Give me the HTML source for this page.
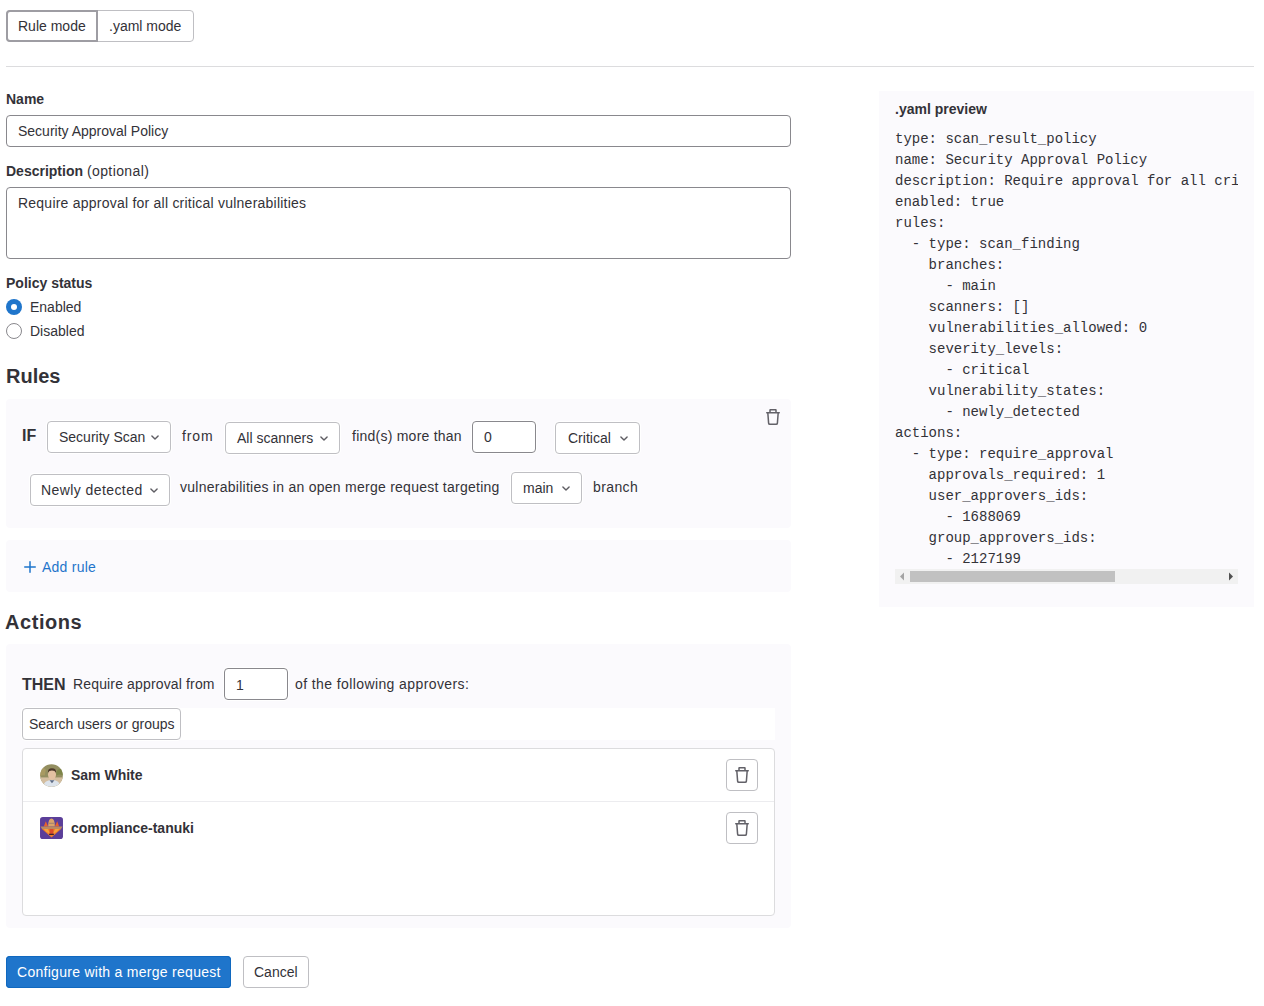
<!DOCTYPE html>
<html><head><meta charset="utf-8">
<style>
html,body{margin:0;padding:0;background:#fff;}
body{width:1264px;height:1006px;position:relative;overflow:hidden;font-family:"Liberation Sans",sans-serif;font-size:14px;color:#333238;}
.a{position:absolute;box-sizing:border-box;}
.t{position:absolute;white-space:nowrap;line-height:16px;}
.b{font-weight:bold;}
.box{position:absolute;background:#fbfafd;border-radius:4px;}
.inp{position:absolute;box-sizing:border-box;background:#fff;border:1px solid #89888d;border-radius:4px;box-shadow:0 0 0 1px #fff;}
.dd{position:absolute;box-sizing:border-box;background:#fff;border:1px solid #bfbfc3;border-radius:4px;box-shadow:0 0 0 1px #fff;}
.chev{position:absolute;width:16px;height:16px;}
.mono{position:absolute;font-family:"Liberation Mono",monospace;font-size:14px;line-height:21px;white-space:pre;color:#333238;}
</style></head><body>

<!-- mode toggle -->
<div class="a" style="left:6px;top:10px;width:188px;height:32px;border:1px solid #bfbfc3;border-radius:4px;"></div>
<div class="a" style="left:6px;top:10px;width:92px;height:32px;border:2px solid #9e9da3;border-radius:4px 0 0 4px;"></div>
<div class="t" style="left:18px;top:18px;">Rule mode</div>
<div class="t" style="left:109px;top:18px;">.yaml mode</div>

<!-- hr -->
<div class="a" style="left:6px;top:66px;width:1248px;height:1px;background:#dcdcde;"></div>

<!-- Name -->
<div class="t b" style="left:6px;top:91px;">Name</div>
<div class="inp" style="left:6px;top:115px;width:785px;height:32px;"></div>
<div class="t" style="left:18px;top:123px;">Security Approval Policy</div>

<!-- Description -->
<div class="t" style="left:6px;top:163px;"><span class="b">Description</span> <span style="letter-spacing:0.4px">(optional)</span></div>
<div class="inp" style="left:6px;top:187px;width:785px;height:72px;"></div>
<div class="t" style="left:18px;top:195px;letter-spacing:0.23px;">Require approval for all critical vulnerabilities</div>

<!-- Policy status -->
<div class="t b" style="left:6px;top:275px;">Policy status</div>
<div class="a" style="left:6px;top:299px;width:16px;height:16px;border-radius:50%;background:#1f75cb;"></div>
<div class="a" style="left:11px;top:304px;width:6px;height:6px;border-radius:50%;background:#fff;"></div>
<div class="t" style="left:30px;top:299px;">Enabled</div>
<div class="a" style="left:6px;top:323px;width:16px;height:16px;border-radius:50%;border:1px solid #89888d;background:#fff;"></div>
<div class="t" style="left:30px;top:323px;">Disabled</div>

<!-- Rules -->
<div class="t b" style="left:6px;top:365px;font-size:20px;line-height:23px;">Rules</div>
<div class="box" style="left:6px;top:399px;width:785px;height:129px;"></div>


<!-- rule row 1 -->
<div class="t b" style="left:22px;top:427px;font-size:16px;line-height:18px;">IF</div>
<div class="dd" style="left:47px;top:421px;width:124px;height:32px;"></div>
<div class="t" style="left:59px;top:429px;">Security Scan</div>
<svg class="chev" style="left:147px;top:429px;" viewBox="0 0 16 16"><path fill="none" stroke="#5e5d63" stroke-width="1.4" stroke-linecap="round" stroke-linejoin="round" d="M4.9 6.9L8 10l3.1-3.1"/></svg>
<div class="t" style="left:182px;top:428px;letter-spacing:0.9px;">from</div>
<div class="dd" style="left:225px;top:422px;width:115px;height:32px;"></div>
<div class="t" style="left:237px;top:430px;">All scanners</div>
<svg class="chev" style="left:316px;top:430px;" viewBox="0 0 16 16"><path fill="none" stroke="#5e5d63" stroke-width="1.4" stroke-linecap="round" stroke-linejoin="round" d="M4.9 6.9L8 10l3.1-3.1"/></svg>
<div class="t" style="left:352px;top:428px;letter-spacing:0.24px;">find(s) more than</div>
<div class="inp" style="left:472px;top:421px;width:64px;height:32px;"></div>
<div class="t" style="left:484px;top:429px;">0</div>
<div class="dd" style="left:555px;top:422px;width:85px;height:32px;"></div>
<div class="t" style="left:568px;top:430px;">Critical</div>
<svg class="chev" style="left:616px;top:430px;" viewBox="0 0 16 16"><path fill="none" stroke="#5e5d63" stroke-width="1.4" stroke-linecap="round" stroke-linejoin="round" d="M4.9 6.9L8 10l3.1-3.1"/></svg>
<svg class="a" style="left:765px;top:409px;width:16px;height:16px;" viewBox="0 0 16 16"><path fill="#626168" fill-rule="evenodd" d="M5.750 3V1.5h4.5V3h-4.5Zm-1.5 0V1a1 1 0 0 1 1-1h5.5a1 1 0 0 1 1 1v2h2.5a.75.75 0 0 1 0 1.5h-.365l-.743 9.653A2 2 0 0 1 11.148 16H4.852a2 2 0 0 1-1.994-1.847L2.115 4.5H1.75a.75.75 0 0 1 0-1.5h2.5Zm-.63 1.5h8.76l-.734 9.538a.5.5 0 0 1-.498.462H4.852a.5.5 0 0 1-.498-.462L3.62 4.5Z"/></svg>

<!-- rule row 2 -->
<div class="dd" style="left:30px;top:474px;width:140px;height:32px;"></div>
<div class="t" style="left:41px;top:482px;letter-spacing:0.42px;">Newly detected</div>
<svg class="chev" style="left:146px;top:482px;" viewBox="0 0 16 16"><path fill="none" stroke="#5e5d63" stroke-width="1.4" stroke-linecap="round" stroke-linejoin="round" d="M4.9 6.9L8 10l3.1-3.1"/></svg>
<div class="t" style="left:180px;top:479px;letter-spacing:0.26px;">vulnerabilities in an open merge request targeting</div>
<div class="dd" style="left:511px;top:472px;width:71px;height:32px;"></div>
<div class="t" style="left:523px;top:480px;">main</div>
<svg class="chev" style="left:558px;top:480px;" viewBox="0 0 16 16"><path fill="none" stroke="#5e5d63" stroke-width="1.4" stroke-linecap="round" stroke-linejoin="round" d="M4.9 6.9L8 10l3.1-3.1"/></svg>
<div class="t" style="left:593px;top:479px;letter-spacing:0.4px;">branch</div>

<!-- add rule -->
<div class="box" style="left:6px;top:540px;width:785px;height:52px;"></div>
<svg class="a" style="left:22px;top:559px;width:16px;height:16px;" viewBox="0 0 16 16"><path fill="#1f75cb" d="M8.75 2.75a.75.75 0 0 0-1.5 0v4.5h-4.5a.75.75 0 0 0 0 1.5h4.5v4.5a.75.75 0 0 0 1.5 0v-4.5h4.5a.75.75 0 0 0 0-1.5h-4.5v-4.5Z"/></svg>
<div class="t" style="left:42px;top:559px;color:#1f75cb;letter-spacing:0.25px;">Add rule</div>

<!-- Actions -->
<div class="t b" style="left:5px;top:611px;font-size:20px;line-height:23px;letter-spacing:0.55px;">Actions</div>
<div class="box" style="left:6px;top:644px;width:785px;height:284px;"></div>
<div class="t b" style="left:22px;top:676px;font-size:16px;line-height:18px;">THEN</div>
<div class="t" style="left:73px;top:676px;letter-spacing:0.15px;">Require approval from</div>
<div class="inp" style="left:224px;top:668px;width:64px;height:32px;"></div>
<div class="t" style="left:236px;top:677px;">1</div>
<div class="t" style="left:295px;top:676px;letter-spacing:0.4px;">of the following approvers:</div>

<div class="a" style="left:22px;top:708px;width:753px;height:32px;background:#fff;"></div>
<div class="dd" style="left:22px;top:708px;width:159px;height:32px;"></div>
<div class="t" style="left:29px;top:716px;">Search users or groups</div>

<div class="a" style="left:22px;top:748px;width:753px;height:168px;background:#fff;border:1px solid #dcdcde;border-radius:4px;"></div>
<div class="a" style="left:23px;top:801px;width:751px;height:1px;background:#ececef;"></div>

<!-- Sam avatar -->
<svg class="a" style="left:40px;top:764px;width:23px;height:23px;" viewBox="0 0 24 24">
<defs><clipPath id="c1"><circle cx="12" cy="12" r="11.8"/></clipPath></defs>
<g clip-path="url(#c1)">
<rect width="24" height="24" fill="#938e60"/>
<path d="M0 0H24V6Q20 3 17 8L17 12Q21 10 24 12V0Z" fill="#7d8548"/>
<path d="M0 4Q3 2 6 6L5 12Q2 11 0 13Z" fill="#a89a62"/>
<rect x="0" y="14" width="24" height="10" fill="#d4bea0"/>
<path d="M3 24Q4 17 12.5 16.5Q21 17 21 24Z" fill="#dde4ec"/>
<path d="M10 17L12.5 20L15 17Z" fill="#5d6b84"/>
<ellipse cx="12.5" cy="11" rx="4.2" ry="5.4" fill="#e3c1a2"/>
<path d="M8.2 9Q8 4.5 12.5 4.5Q17 4.5 16.8 9Q15.5 6.8 12.5 6.8Q9.5 6.8 8.2 9Z" fill="#4e3a2c"/>
</g></svg>
<div class="t b" style="left:71px;top:767px;">Sam White</div>
<div class="a" style="left:726px;top:759px;width:32px;height:32px;border:1px solid #bfbfc3;border-radius:4px;background:#fff;"></div>
<svg class="a" style="left:734px;top:767px;width:16px;height:16px;" viewBox="0 0 16 16"><path fill="#626168" fill-rule="evenodd" d="M5.750 3V1.5h4.5V3h-4.5Zm-1.5 0V1a1 1 0 0 1 1-1h5.5a1 1 0 0 1 1 1v2h2.5a.75.75 0 0 1 0 1.5h-.365l-.743 9.653A2 2 0 0 1 11.148 16H4.852a2 2 0 0 1-1.994-1.847L2.115 4.5H1.75a.75.75 0 0 1 0-1.5h2.5Zm-.63 1.5h8.76l-.734 9.538a.5.5 0 0 1-.498.462H4.852a.5.5 0 0 1-.498-.462L3.62 4.5Z"/></svg>

<!-- compliance avatar -->
<svg class="a" style="left:40px;top:817px;width:23px;height:22px;" viewBox="0 0 24 23">
<rect width="24" height="23" rx="3" fill="#5b3e99"/>
<path d="M4 10L6 4.5L8.5 10Z" fill="#e8622a"/>
<path d="M15.5 10L18 4.5L20 10Z" fill="#e8622a"/>
<path d="M8.5 10Q8.5 1.5 12 1.5Q15.5 1.5 15.5 10Z" fill="#dba46a"/>
<rect x="8.8" y="6" width="6.4" height="1.2" fill="#a88670"/>
<path d="M0.5 10H23.5L22 12.5H2Z" fill="#b98a62"/>
<path d="M2 12.5H22L12 21.5Z" fill="#ee7b2c"/>
<path d="M4 12.5H8L12 19L6 15Z" fill="#f6a23c"/>
<path d="M16 12.5H20L18 15L12 19Z" fill="#f6a23c"/>
<rect x="10" y="12.5" width="4" height="5.5" fill="#dd4a2a"/>
<rect x="9.5" y="17.5" width="5" height="1.3" fill="#3b2530"/>
</svg>
<div class="t b" style="left:71px;top:820px;">compliance-tanuki</div>
<div class="a" style="left:726px;top:812px;width:32px;height:32px;border:1px solid #bfbfc3;border-radius:4px;background:#fff;"></div>
<svg class="a" style="left:734px;top:820px;width:16px;height:16px;" viewBox="0 0 16 16"><path fill="#626168" fill-rule="evenodd" d="M5.750 3V1.5h4.5V3h-4.5Zm-1.5 0V1a1 1 0 0 1 1-1h5.5a1 1 0 0 1 1 1v2h2.5a.75.75 0 0 1 0 1.5h-.365l-.743 9.653A2 2 0 0 1 11.148 16H4.852a2 2 0 0 1-1.994-1.847L2.115 4.5H1.75a.75.75 0 0 1 0-1.5h2.5Zm-.63 1.5h8.76l-.734 9.538a.5.5 0 0 1-.498.462H4.852a.5.5 0 0 1-.498-.462L3.62 4.5Z"/></svg>

<!-- bottom buttons -->
<div class="a" style="left:6px;top:956px;width:225px;height:32px;background:#1f75cb;border-radius:4px;box-shadow:inset 0 0 0 1px #1068bf;"></div>
<div class="t" style="left:17px;top:964px;color:#fff;letter-spacing:0.28px;">Configure with a merge request</div>
<div class="a" style="left:243px;top:956px;width:66px;height:32px;border:1px solid #bfbfc3;border-radius:4px;background:#fff;"></div>
<div class="t" style="left:254px;top:964px;">Cancel</div>

<!-- yaml preview -->
<div class="box" style="left:879px;top:91px;width:375px;height:516px;border-radius:0;"></div>
<div class="t b" style="left:895px;top:101px;">.yaml preview</div>
<div class="a" style="left:895px;top:128px;width:343px;height:440px;overflow:hidden;">
<div class="mono" style="left:0;top:1px;">type: scan_result_policy
name: Security Approval Policy
description: Require approval for all critical vulnerabilities
enabled: true
rules:
  - type: scan_finding
    branches:
      - main
    scanners: []
    vulnerabilities_allowed: 0
    severity_levels:
      - critical
    vulnerability_states:
      - newly_detected
actions:
  - type: require_approval
    approvals_required: 1
    user_approvers_ids:
      - 1688069
    group_approvers_ids:
      - 2127199</div></div>
<!-- scrollbar -->
<div class="a" style="left:895px;top:569px;width:343px;height:15px;background:#f1f1f1;"></div>
<div class="a" style="left:910px;top:571px;width:205px;height:11px;background:#c1c1c1;"></div>
<svg class="a" style="left:899px;top:572px;width:6px;height:9px;" viewBox="0 0 6 9"><path d="M5 0.5 L1 4.5 L5 8.5Z" fill="#a3a3a3"/></svg>
<svg class="a" style="left:1228px;top:572px;width:6px;height:9px;" viewBox="0 0 6 9"><path d="M1 0.5 L5 4.5 L1 8.5Z" fill="#505050"/></svg>

</body></html>
